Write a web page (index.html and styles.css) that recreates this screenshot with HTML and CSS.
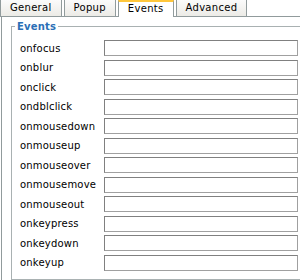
FILE: index.html
```html
<!DOCTYPE html>
<html>
<head>
	<title>Insert/edit link - Events</title>
	<link rel="stylesheet" href="styles.css">
</head>
<body>
	<div class="dialog">
		<ul class="tabs">
			<li class="tab">General</li>
			<li class="tab">Popup</li>
			<li class="tab current">Events</li>
			<li class="tab">Advanced</li>
		</ul>

		<div class="panel">
			<fieldset>
				<legend>Events</legend>
				<div class="events">
					<label for="onfocus">onfocus</label><input type="text" id="onfocus">
					<label for="onblur">onblur</label><input type="text" id="onblur">
					<label for="onclick">onclick</label><input type="text" id="onclick">
					<label for="ondblclick">ondblclick</label><input type="text" id="ondblclick">
					<label for="onmousedown">onmousedown</label><input type="text" id="onmousedown">
					<label for="onmouseup">onmouseup</label><input type="text" id="onmouseup">
					<label for="onmouseover">onmouseover</label><input type="text" id="onmouseover">
					<label for="onmousemove">onmousemove</label><input type="text" id="onmousemove">
					<label for="onmouseout">onmouseout</label><input type="text" id="onmouseout">
					<label for="onkeypress">onkeypress</label><input type="text" id="onkeypress">
					<label for="onkeydown">onkeydown</label><input type="text" id="onkeydown">
					<label for="onkeyup">onkeyup</label><input type="text" id="onkeyup">
				</div>
			</fieldset>
		</div>
	</div>
</body>
</html>
```

FILE: styles.css
```css
/* Dialog look, tabs on top of a bordered panel */

body {
	margin: 0;
	overflow: hidden;
	background: #ffffff;
	font-family: "DejaVu Sans", Verdana, sans-serif;
	font-size: 10px;
	color: #000000;
}

.dialog {
	width: 320px;
	height: 280px;
	overflow: hidden;
}

.tabs {
	display: flex;
	margin: 0;
	padding: 0;
	list-style: none;
	height: 16px;
	border-bottom: 1px solid #919b9c;
}

.tab {
	margin-right: 2px;
	padding: 0 9px;
	line-height: 15px;
	height: 16px;
	box-sizing: border-box;
	letter-spacing: 0.3px;
	border: 1px solid #919b9c;
	border-top: none;
	border-bottom: none;
	background: linear-gradient(#fbfbfb, #ecebe6);
}

.tab.current {
	height: 17px;
	border-top: 2px solid #ffc73c;
	line-height: 14px;
	background: #ffffff;
}

.panel {
	margin-left: 1px;
	border-left: 1px solid #919b9c;
	padding: 4px 0 20px 9px;
}

fieldset {
	margin: 0;
	padding: 8px 8px 8px 8px;
	border: 1px solid #a9b1b2;
}

legend {
	margin-left: -5px;
	padding: 0 2px;
	color: #2b6fb6;
	font-weight: bold;
	letter-spacing: 0.2px;
}

.events {
	display: grid;
	grid-template-columns: 84px 194px;
	row-gap: 3.5px;
	align-items: center;
	letter-spacing: 0.2px;
}

input {
	box-sizing: border-box;
	height: 16px;
	margin: 0;
	padding: 0 2px;
	border: 1px solid #a0a0a0;
	border-top-color: #808080;
	border-left-color: #808080;
	font-family: inherit;
	font-size: 10px;
}
```
